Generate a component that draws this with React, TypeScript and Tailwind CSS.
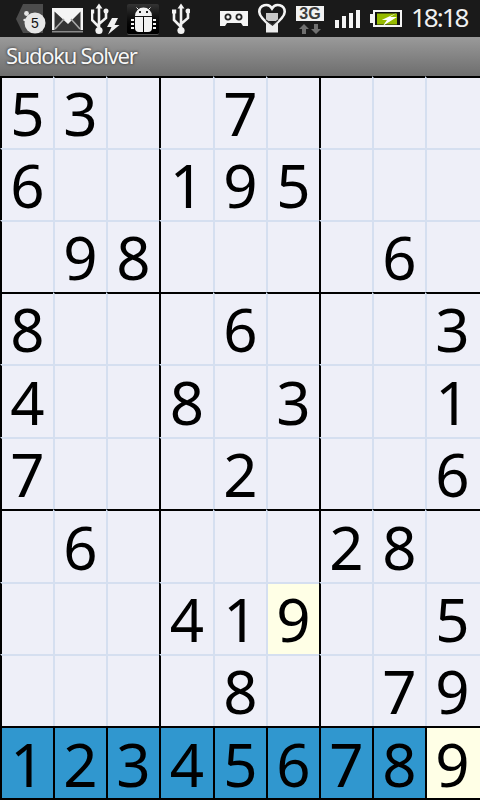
const board = [
  "53  7    ",
  "6  195   ",
  " 98    6 ",
  "8   6   3",
  "4  8 3  1",
  "7   2   6",
  " 6    28 ",
  "   419  5",
  "    8  79",
];

function Cell({ v, r, c }: { v: string; r: number; c: number }) {
  const thickL = c % 3 === 0;
  const thickT = r % 3 === 0;
  const selected = r === 7 && c === 5;
  return (
    <div
      className={
        "flex items-center justify-center border-l-2 border-t-2 text-[60px] leading-none text-black " +
        (c === 8 ? "pr-[2px] " : "") +
        (thickL ? "border-l-black " : "border-l-[#d5dff0] ") +
        (thickT ? "border-t-black " : "border-t-[#d5dff0] ") +
        (selected ? "bg-[#ffffe6]" : "bg-[#eeeff8]")
      }
    >
      {v.trim()}
    </div>
  );
}

function UsbGlyph({ x }: { x: number }) {
  return (
    <g>
      <path d={`M${x} 7V30M${x} 27l-7-7v-8M${x} 24l7-6v-6`} fill="none" stroke="#f2f2f2" strokeWidth="2.6" />
      <path d={`M${x} 3.5l3.5 5h-7z`} fill="#f2f2f2" />
      <rect x={x - 9.2} y="9.5" width="4.4" height="4" fill="#f2f2f2" />
      <circle cx={x + 7} cy="11" r="2.5" fill="#f2f2f2" />
      <circle cx={x} cy="30.5" r="3.6" fill="#f2f2f2" />
    </g>
  );
}

function StatusBar() {
  return (
    <div className="h-[37px] bg-[#1a1a1a] flex items-start">
      <div className="relative ml-[16px] w-[30px] h-[37px]">
        <svg width="30" height="37" viewBox="16 0 30 37">
          <path d="M23 4H43V33H23L16 19z" fill="#4c4c4c" />
          <circle cx="35" cy="23" r="10.5" fill="#e6e6e6" />
          <circle cx="26.5" cy="13.5" r="2.4" fill="#e6e6e6" />
          <circle cx="24.5" cy="20" r="1.2" fill="#e6e6e6" />
        </svg>
        <span className="absolute left-[15px] top-[14px] w-[8px] text-center text-[14px] leading-[18px] text-[#111] font-['Liberation_Sans',sans-serif]">5</span>
      </div>
      <svg width="32" height="37" viewBox="52 0 32 37" className="ml-[6px]">
        <rect x="52" y="8" width="31" height="23" fill="#333" />
        <path d="M52 8h31v22h-2.5V11.5L68 24 54.5 11.5V30H52z" fill="#f4f4f4" />
        <path d="M55 29l9-10M80 29l-9-10" stroke="#a8a8a8" strokeWidth="1.6" fill="none" />
        <rect x="52" y="31" width="31" height="1.5" fill="#8a8a8a" />
      </svg>
      <svg width="29" height="37" viewBox="91 0 29 37" className="ml-[7px]">
        <UsbGlyph x={99} />
        <path d="M112 18h6l-3.500 7h5L108 34.500l3.500-7.500H107z" fill="#f2f2f2" />
      </svg>
      <div className="ml-[7px] mt-[4px] w-[32px] h-[31px] rounded-[2px] bg-gradient-to-b from-[#343434] to-black border-b border-b-[#555]">
        <svg width="32" height="30" viewBox="127 4 32 30">
          <path d="M135 16a8.500 8.500 0 0 1 17 0z" fill="#f2f2f2" />
          <path d="M136.500 7.500l2 2M150.500 7.500l-2 2" stroke="#f2f2f2" strokeWidth="1" />
          <path d="M135 17h8v15h-4a4 4 0 0 1-4-4zM144 17h8v11a4 4 0 0 1-4 4h-4z" fill="#f2f2f2" />
          <path d="M131 19h3v2h-3zM131 23h3v2h-3zM131 27h3v2h-3zM153 19h3v2h-3zM153 23h3v2h-3zM153 27h3v2h-3z" fill="#f2f2f2" />
          <rect x="139" y="11" width="2" height="2" fill="#222" />
          <rect x="146" y="11" width="2" height="2" fill="#222" />
        </svg>
      </div>
      <svg width="18" height="37" viewBox="172 0 18 37" className="ml-[13px]">
        <UsbGlyph x={181} />
      </svg>
      <svg width="28" height="37" viewBox="220 0 28 37" className="ml-[30px]">
        <path d="M220 11h28v15h-5l-2-3h-14l-2 3h-5z" fill="#f4f4f4" />
        <circle cx="228" cy="17" r="2.6" fill="none" stroke="#222" strokeWidth="1.8" />
        <circle cx="239" cy="17" r="2.6" fill="none" stroke="#222" strokeWidth="1.8" />
      </svg>
      <svg width="28" height="37" viewBox="258 0 28 37" className="ml-[10px]">
        <path d="M272 27C263 20 259.300 16 259.300 12a6.800 6.800 0 0 1 12.700-3.500 6.800 6.800 0 0 1 12.700 3.500c0 4-3.700 8-12.700 15z" fill="none" stroke="#f4f4f4" strokeWidth="2.6" />
        <rect x="266" y="13" width="12" height="8" fill="#c9c9c9" />
        <path d="M266 21l6.500 5 5.500-5v11.500h-12z" fill="#ececec" />
        <path d="M266 20l6.500 5 5.500-5" fill="none" stroke="#333" strokeWidth="1.4" />
      </svg>
      <div className="ml-[10px] mt-[6px] w-[28px] flex flex-col">
        <div className="h-[15px] bg-[#f2f2f2] text-[#3c3c3c] text-[16px] leading-[15px] font-bold text-center font-['Liberation_Sans',sans-serif]">3G</div>
        <svg width="28" height="12" viewBox="296 21 28 12" className="mt-[1px]">
          <path d="M304 23l5 5h-3v5h-4v-5h-3zM316 33l-5-5h3v-5h4v5h3z" fill="#707070" />
        </svg>
      </div>
      <svg width="25" height="37" viewBox="335 0 25 37" className="ml-[11px]">
        <path d="M335 20h4v8h-4zM342 16h4v12h-4zM349 13h4v15h-4zM356 10h4v18h-4z" fill="#f4f4f4" />
      </svg>
      <svg width="32" height="37" viewBox="370 0 32 37" className="ml-[10px]">
        <rect x="374" y="11" width="27" height="15" fill="#111" stroke="#f4f4f4" strokeWidth="2" />
        <rect x="370" y="14" width="4" height="9" fill="#f4f4f4" />
        <rect x="377" y="13.500" width="20" height="11" fill="#96ba00" />
        <path d="M397 12.700L381.700 20H387L383 25.700 397 17H390z" fill="#fff" />
      </svg>
      <span className="ml-[9px] mt-[1px] text-[26px] leading-[32px] tracking-[-2px] text-[#f0f0f0] font-['Noto_Sans',sans-serif]">18:18</span>
    </div>
  );
}

export default function App() {
  return (
    <div className="w-[480px] h-[800px] flex flex-col overflow-hidden font-['Noto_Sans',sans-serif] bg-black">
      <StatusBar />
      <div className="h-[39px] flex items-center pb-[3px] px-[6px] bg-gradient-to-b from-[#9a9a9a] to-[#6e6e6e]">
        <span className="text-[22px] leading-none tracking-[-1.3px] text-[#f6f6f6] font-['Noto_Sans',sans-serif] [text-shadow:0_0_3px_rgba(0,0,0,0.8)]">Sudoku Solver</span>
      </div>
      <div className="h-[650px] grid grid-cols-[53px_53px_53px_54px_53px_53px_53px_53px_55px] grid-rows-[72px_72px_72px_72px_73px_72px_73px_72px_72px]">
        {board.flatMap((row, r) =>
          row.split("").map((v, c) => <Cell key={r + "-" + c} v={v} r={r} c={c} />)
        )}
      </div>
      <div className="h-[74px] grid grid-cols-[53px_53px_53px_54px_53px_53px_53px_53px_55px] border-y-2 border-y-black">
        {"123456789".split("").map((d, i) => (
          <div
            key={d}
            className={
              "flex items-center justify-center pt-[1px] text-[60px] leading-none text-black border-l-2 border-l-black " +
              (i === 8 ? "pr-[2px] bg-[#ffffe6]" : "bg-[#3097cf]")
            }
          >
            {d}
          </div>
        ))}
      </div>
    </div>
  );
}
